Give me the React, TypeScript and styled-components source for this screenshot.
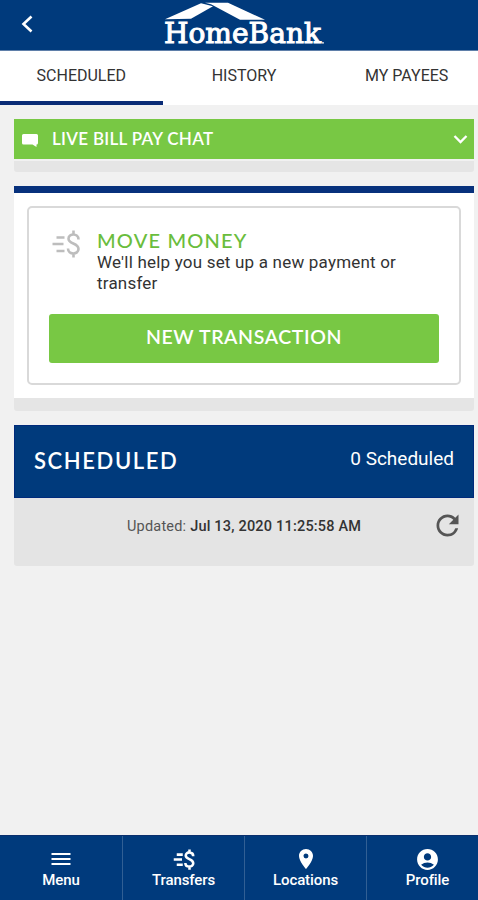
import React from "react";
import styled, { createGlobalStyle } from "styled-components";
import { MdRefresh, MdLocationOn, MdAccountCircle } from "react-icons/md";

const navy = "#003a7c";
const green = "#78c844";

const GlobalStyle = createGlobalStyle`
  * { box-sizing: border-box; }
  html, body, #root { margin: 0; height: 100%; }
  body { overflow: hidden; background: #f1f1f1; font-family: Roboto, sans-serif; color: #333; }
  button { font: inherit; border: 0; padding: 0; background: none; color: inherit; }
  svg { display: block; }
`;

const Screen = styled.div`
  width: 488px;
  height: 900px;
  display: flex;
  flex-direction: column;
`;

const Header = styled.header`
  height: 51px;
  background: ${navy};
  border-bottom: 1px solid #5f7fa9;
  display: grid;
  grid-template-columns: 160px 170px 1fr;
`;

const BackButton = styled.button`
  display: flex;
  padding: 15px 0 0 21px;
`;

const Tabs = styled.nav`
  height: 54px;
  flex: none;
  background: #fff;
  display: grid;
  grid-template-columns: repeat(3, 1fr);
`;

const Tab = styled.button<{ $active?: boolean }>`
  height: 54px;
  padding-top: 16px;
  line-height: 18px;
  font-size: 16px;
  display: flex;
  justify-content: center;
  border-bottom: 4px solid ${(p) => (p.$active ? "#0a2c76" : "transparent")};
`;

const Content = styled.main`
  flex: 1;
  padding: 14px 14px 0;
  display: flex;
  flex-direction: column;
`;

const ChatBar = styled.button`
  height: 40px;
  background: ${green};
  color: #fff;
  display: flex;
  align-items: center;
  padding: 0 6px 0 8px;
`;

const ChatLabel = styled.span`
  flex: 1;
  margin-left: 14px;
  margin-top: -1px;
  text-align: left;
  font: 600 17px/20px Lato, sans-serif;
  letter-spacing: 0.3px;
`;

const Strip = styled.div<{ $h: number; $top?: number }>`
  height: ${(p) => p.$h}px;
  margin-top: ${(p) => p.$top || 0}px;
  margin-bottom: 14px;
  background: #e5e5e5;
  border-radius: 0 0 3px 3px;
`;

const MoneyPanel = styled.section`
  height: 212px;
  padding: 13px 13px 0;
  background: #fff;
  border-top: 7px solid #07317c;
`;

const MoneyCard = styled.div`
  height: 179px;
  border: 2px solid #d9d9d9;
  border-radius: 5px;
  padding: 21px 20px 0;
`;

const Intro = styled.div`
  display: flex;
  height: 85px;
  padding-left: 2px;
  gap: 17px;
  color: #bdbdbd;
`;

const MoneyGlyph = styled.span`
  padding-top: 1px;
`;

const Title = styled.h2`
  margin: 0;
  color: #6abd3c;
  font: 500 20px/22px Lato, sans-serif;
  letter-spacing: 1.2px;
`;

const Description = styled.p`
  margin: 1px 0 0;
  width: 320px;
  color: #333;
  font-size: 17px;
  line-height: 21px;
  letter-spacing: 0.2px;
`;

const NewButton = styled.button`
  width: 390px;
  height: 49px;
  padding-bottom: 3px;
  border-radius: 3px;
  background: ${green};
  color: #fff;
  font: 600 19.5px/24px Lato, sans-serif;
  letter-spacing: 0.6px;
`;

const ScheduledHeader = styled.div`
  height: 73px;
  background: ${navy};
  border: 1px solid #002a7b;
  color: #fff;
  display: flex;
  justify-content: space-between;
  padding: 22px 19px 0;
`;

const ScheduledTitle = styled.h2`
  margin: 0;
  font: 600 22px/26px Lato, sans-serif;
  letter-spacing: 1.6px;
`;

const Count = styled.span`
  margin-top: 1px;
  font-size: 19px;
  line-height: 20px;
`;

const UpdatedRow = styled.div`
  height: 68px;
  background: #e4e4e4;
  border-radius: 0 0 3px 3px;
  color: #555;
  display: flex;
  align-items: flex-start;
  padding: 11px 10px 0 113px;
  justify-content: space-between;
`;

const Updated = styled.span`
  margin-top: 9px;
  font-size: 14.5px;
  line-height: 18px;
  letter-spacing: 0.2px;
  white-space: nowrap;
  strong { color: #333; font-weight: 500; }
`;

const BottomNav = styled.nav`
  height: 65px;
  flex: none;
  background: ${navy};
  border-top: 1px solid #0a2f6d;
  display: grid;
  grid-template-columns: repeat(4, 1fr);
`;

const NavItem = styled.button`
  display: flex;
  flex-direction: column;
  align-items: center;
  padding-top: 11px;
  color: #fff;
  font-size: 15px;
  font-weight: 500;
  line-height: 18px;
  letter-spacing: -0.1px;
  & + & { border-left: 1px solid #315f94; }
`;

const NavIcon = styled.span`
  height: 24px;
  display: flex;
  align-items: center;
`;

function MoneyIcon({ width, height, weight }: { width: number; height: number; weight: number }) {
  return (
    <svg width={width} height={height} viewBox="0 0 28 28" fill="none" stroke="currentColor" strokeWidth={weight}>
      <path d="M5 7.5H13M1 14H12M5 21H13" />
      <path d="M27 9.5C27 3 17 3 17 8.8C17 14.5 27 12.5 27 19C27 25 16.5 25 16.5 18.5M22 0.5V5M22 23V27.5" />
    </svg>
  );
}

function Logo() {
  return (
    <svg width="170" height="50" viewBox="-3 0 170 50" fill="#fff">
      <path d="M2 19.3L38 3.3L50 6.3L28 18.8Z" />
      <path d="M42 2.8H65L102 19.8H77L48 4.3Z" />
      <text x="1" y="43.3" textLength="157" lengthAdjust="spacingAndGlyphs" fontFamily="DejaVu Serif, serif" fontSize="27.5" stroke="#fff" strokeWidth="1">HomeBank</text>
      <circle cx="160" cy="42.8" r="0.9" />
    </svg>
  );
}

export default function App() {
  return (
    <>
      <GlobalStyle />
      <Screen>
        <Header>
          <BackButton aria-label="Back">
            <svg width="12" height="18" viewBox="0 0 12 18" fill="none" stroke="#fff" strokeWidth="2.6">
              <path d="M10.5 1.5L2.5 9L10.5 16.5" />
            </svg>
          </BackButton>
          <Logo />
        </Header>
        <Tabs>
          <Tab $active>SCHEDULED</Tab>
          <Tab>HISTORY</Tab>
          <Tab>MY PAYEES</Tab>
        </Tabs>
        <Content>
          <ChatBar>
            <svg width="16" height="16" viewBox="0 0 16 16" fill="#fff">
              <path d="M1.5 3H14.5Q16 3 16 4.5V12Q16 13.5 14.5 13.5V16L10.5 13.5H1.5Q0 13.5 0 12V4.5Q0 3 1.5 3Z" />
            </svg>
            <ChatLabel>LIVE BILL PAY CHAT</ChatLabel>
            <svg width="15" height="10" viewBox="0 0 15 10" fill="none" stroke="#fff" strokeWidth="2.3">
              <path d="M1.5 2L7.5 8L13.5 2" />
            </svg>
          </ChatBar>
          <Strip $h={11} $top={2} />
          <MoneyPanel>
            <MoneyCard>
              <Intro>
                <MoneyGlyph><MoneyIcon width={29} height={28} weight={2.6} /></MoneyGlyph>
                <div>
                  <Title>MOVE MONEY</Title>
                  <Description>We'll help you set up a new payment or transfer</Description>
                </div>
              </Intro>
              <NewButton>NEW TRANSACTION</NewButton>
            </MoneyCard>
          </MoneyPanel>
          <Strip $h={13} />
          <ScheduledHeader>
            <ScheduledTitle>SCHEDULED</ScheduledTitle>
            <Count>0 Scheduled</Count>
          </ScheduledHeader>
          <UpdatedRow>
            <Updated>Updated: <strong>Jul 13, 2020 11:25:58 AM</strong></Updated>
            <MdRefresh size={33} />
          </UpdatedRow>
        </Content>
        <BottomNav>
          <NavItem>
            <NavIcon>
              <svg width="20" height="14" viewBox="0 0 20 14" stroke="#fff" strokeWidth="2">
                <path d="M0.5 2H19.5M0.5 7H19.5M0.5 12H19.5" />
              </svg>
            </NavIcon>
            Menu
          </NavItem>
          <NavItem>
            <NavIcon><MoneyIcon width={23} height={21} weight={3.4} /></NavIcon>
            Transfers
          </NavItem>
          <NavItem>
            <NavIcon><MdLocationOn size={24} /></NavIcon>
            Locations
          </NavItem>
          <NavItem>
            <NavIcon><MdAccountCircle size={25} /></NavIcon>
            Profile
          </NavItem>
        </BottomNav>
      </Screen>
    </>
  );
}
